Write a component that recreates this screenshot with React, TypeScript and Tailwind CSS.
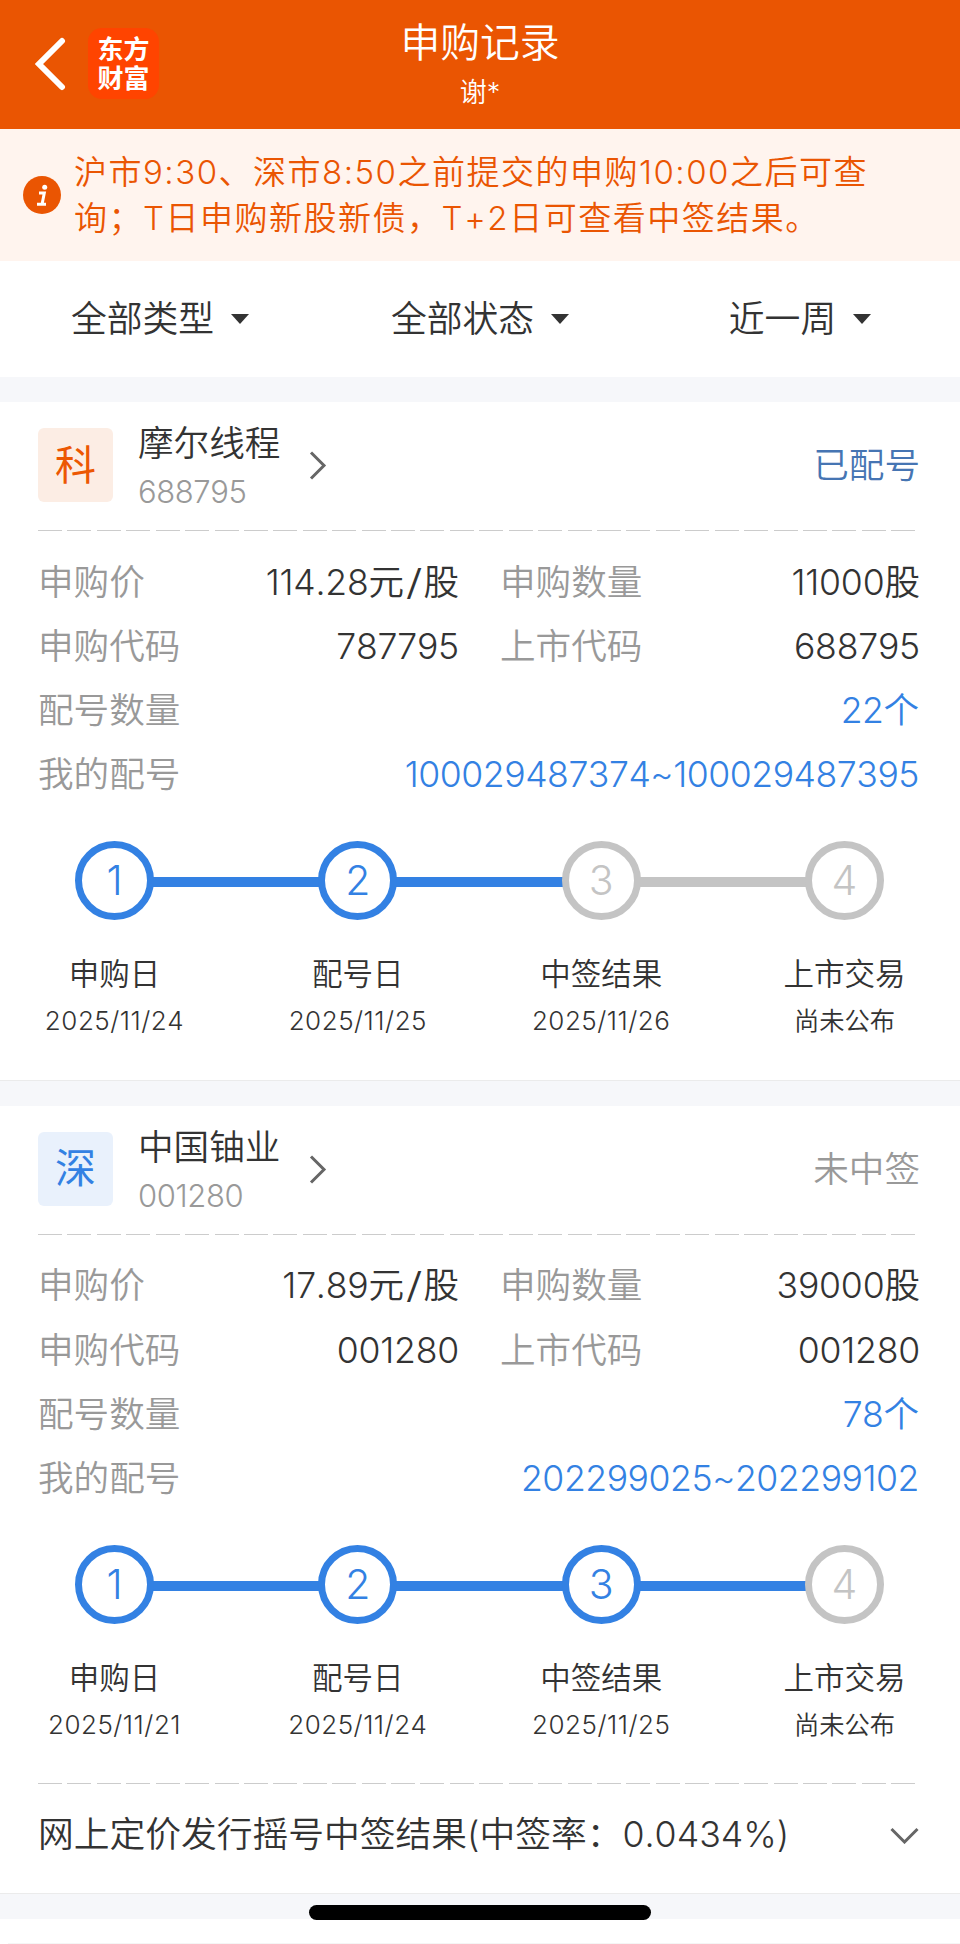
import React from "react";

type StepData = { title: string; note: string; done: boolean };

type RecordData = {
  badge: string;
  badgeClass: string;
  name: string;
  code: string;
  status: string;
  statusClass: string;
  price: string;
  quantity: string;
  applyCode: string;
  listCode: string;
  allotCount: string;
  allotRange: string;
  steps: StepData[];
  result?: string;
};

const records: RecordData[] = [
  {
    badge: "科",
    badgeClass: "bg-[#fcede4] text-[#ec5702]",
    name: "摩尔线程",
    code: "688795",
    status: "已配号",
    statusClass: "text-[#4675b3]",
    price: "114.28元/股",
    quantity: "11000股",
    applyCode: "787795",
    listCode: "688795",
    allotCount: "22个",
    allotRange: "100029487374~100029487395",
    steps: [
      { title: "申购日", note: "2025/11/24", done: true },
      { title: "配号日", note: "2025/11/25", done: true },
      { title: "中签结果", note: "2025/11/26", done: false },
      { title: "上市交易", note: "尚未公布", done: false },
    ],
  },
  {
    badge: "深",
    badgeClass: "bg-[#e9f1fc] text-[#3381e3]",
    name: "中国铀业",
    code: "001280",
    status: "未中签",
    statusClass: "text-[#999999]",
    price: "17.89元/股",
    quantity: "39000股",
    applyCode: "001280",
    listCode: "001280",
    allotCount: "78个",
    allotRange: "202299025~202299102",
    steps: [
      { title: "申购日", note: "2025/11/21", done: true },
      { title: "配号日", note: "2025/11/24", done: true },
      { title: "中签结果", note: "2025/11/25", done: true },
      { title: "上市交易", note: "尚未公布", done: false },
    ],
    result: "网上定价发行摇号中签结果(中签率：0.0434%)",
  },
];

/** Sets runs of Latin characters and digits with their own tracking. */
function Mixed({ text, latin = "tracking-[-0.2px]" }: { text: string; latin?: string }) {
  const parts = text.split(/([\x20-\x7e]+)/).filter(Boolean);
  return (
    <span className="whitespace-nowrap">
      {parts.map((part, i) =>
        /^[\x20-\x7e]/.test(part) ? (
          <span key={i} className={part === "/" ? "mr-[3px] ml-[4px] inline-block scale-x-[1.35]" : latin}>
            {part}
          </span>
        ) : (
          <React.Fragment key={i}>{part}</React.Fragment>
        ),
      )}
    </span>
  );
}

function Header() {
  return (
    <header className="flex h-[129px] bg-[#ea5502] text-white">
      <div className="flex w-[320px] items-start pl-[35px]">
        <svg className="mt-[37px] h-[54px] w-[31px]" viewBox="0 0 31 54" fill="none">
          <path d="M27 4 4 27l23 23" stroke="white" strokeWidth="6" strokeLinecap="round" strokeLinejoin="miter" />
        </svg>
        <div className="mt-[28px] ml-[22px] flex h-[71px] w-[71px] flex-col items-center justify-center rounded-[14px] bg-[#ff4400] text-[26px] leading-[29px] font-bold">
          <span>东方</span>
          <span>财富</span>
        </div>
      </div>
      <div className="flex w-[320px] flex-col items-center">
        <h1 className="mt-[18px] text-[39.8px] leading-[50px]">申购记录</h1>
        <div className="mt-[7px] text-[27px] leading-[36px]">谢*</div>
      </div>
    </header>
  );
}

function Notice() {
  return (
    <section className="flex h-[132px] items-center bg-[#fff4ee] pl-[23px] text-[#ea5502]">
      <svg className="h-[38px] w-[38px]" viewBox="0 0 38 38">
        <circle cx="19" cy="19" r="19" fill="#ea5502" />
        <circle cx="21.7" cy="11.3" r="2.5" fill="white" />
        <path d="M16 17h5.3l-2.2 11M14 28.2h9" fill="none" stroke="white" strokeWidth="3" />
      </svg>
      <p className="ml-[13px] text-[33px] leading-[46px] tracking-[1.5px]">
        <Mixed text="沪市9:30、深市8:50之前提交的申购10:00之后可查" latin="tracking-[1.5px]" />
        <br />
        <Mixed text="询；T日申购新股新债，T+2日可查看中签结果。" latin="tracking-[1.6px]" />
      </p>
    </section>
  );
}

function Filter({ label }: { label: string }) {
  return (
    <div className="flex items-center justify-center text-[35.8px] leading-[50px] text-[#333333]">
      {label}
      <svg className="ml-[17px] h-[10px] w-[18px]" viewBox="0 0 18 10">
        <path d="M0 0h18L9 10z" fill="#333333" />
      </svg>
    </div>
  );
}

function Filters() {
  return (
    <nav className="grid h-[116px] grid-cols-3 items-start pt-[33px]">
      <Filter label="全部类型" />
      <Filter label="全部状态" />
      <Filter label="近一周" />
    </nav>
  );
}

function DashedRule() {
  return (
    <svg className="block h-px w-[878px]" viewBox="0 0 878 1" shapeRendering="crispEdges">
      <path d="M0 .5h878" stroke="#cccccc" strokeDasharray="24 5.42" />
    </svg>
  );
}

function Steps({ steps }: { steps: StepData[] }) {
  return (
    <div className="pr-[76px] pl-[75px]">
      <div className="flex items-center">
        {steps.map((step, i) => (
          <React.Fragment key={step.title}>
            {i > 0 && (
              <div
                className={`z-0 mx-[-3px] mt-[3px] h-[10px] flex-1 ${
                  steps[i - 1].done ? "bg-[#3381e3]" : "bg-[#c4c4c4]"
                }`}
              />
            )}
            <div
              className={`z-10 flex h-[79px] w-[79px] items-center justify-center rounded-full border-[7.5px] bg-white text-[41px] leading-none font-light ${
                step.done ? "border-[#3381e3] text-[#3381e3]" : "border-[#c4c4c4] text-[#c4c4c4]"
              }`}
            >
              {i + 1}
            </div>
          </React.Fragment>
        ))}
      </div>
      <div className="mt-[31px] flex justify-between text-[#333333]">
        {steps.map((step) => (
          <div key={step.title} className="flex w-[79px] flex-col items-center">
            <span className="text-[30.5px] leading-[46px] whitespace-nowrap">{step.title}</span>
            <span className="mt-px text-[25.3px] leading-[46px]">
              <Mixed text={step.note} latin="text-[26px] tracking-[0.5px]" />
            </span>
          </div>
        ))}
      </div>
    </div>
  );
}

function Pair({ label, value }: { label: string; value: string }) {
  return (
    <div className="flex justify-between">
      <span className="text-[#999999]">{label}</span>
      <span className="text-[#333333]">
        <Mixed text={value} />
      </span>
    </div>
  );
}

function WidePair({ label, value }: { label: string; value: string }) {
  return (
    <div className="col-span-2 flex justify-between pr-px">
      <span className="text-[#999999]">{label}</span>
      <span className="text-[#3381e3]">
        <Mixed text={value} latin="tracking-[-0.45px]" />
      </span>
    </div>
  );
}

function RecordCard({ record }: { record: RecordData }) {
  return (
    <article className="border-b border-[#ebebeb] bg-white">
      <div className="flex h-[128px] pr-[40px] pl-[38px]">
        <div
          className={`mt-[26px] flex h-[74px] w-[75px] items-center justify-center rounded-[6px] text-[41px] leading-none font-normal ${record.badgeClass}`}
        >
          {record.badge}
        </div>
        <div className="ml-[25px] flex w-[143px] flex-col pt-[17px]">
          <span className="text-[35.6px] leading-[50px] text-[#333333]">{record.name}</span>
          <span className="text-[31px] leading-[46px] text-[#999999]">
            <Mixed text={record.code} latin="tracking-[-0.4px]" />
          </span>
        </div>
        <svg className="mt-[48px] ml-[28px] h-[31px] w-[18px]" viewBox="0 0 18 31" fill="none">
          <path d="M2 2.500 15 15.500 2 28.500" stroke="#666666" strokeWidth="3" />
        </svg>
        <span className={`mt-[39px] ml-auto text-[35.6px] leading-[50px] ${record.statusClass}`}>
          {record.status}
        </span>
      </div>
      <div className="pl-[38px]">
        <DashedRule />
      </div>
      <div className="grid grid-cols-[421px_420px] gap-x-[41px] pt-[19.5px] pl-[38px] text-[35.6px] leading-[64.3px]">
        <Pair label="申购价" value={record.price} />
        <Pair label="申购数量" value={record.quantity} />
        <Pair label="申购代码" value={record.applyCode} />
        <Pair label="上市代码" value={record.listCode} />
        <WidePair label="配号数量" value={record.allotCount} />
        <WidePair label="我的配号" value={record.allotRange} />
      </div>
      <div className={record.result ? "h-[271.3px] pt-[33.5px]" : "h-[272.3px] pt-[33.5px]"}>
        <Steps steps={record.steps} />
      </div>
      {record.result && (
        <div className="pl-[38px]">
          <DashedRule />
          <div className="flex h-[109px] items-center justify-between pr-[41px] pb-[8px] text-[35.75px] leading-[50px] text-[#333333]">
            <Mixed text={record.result} latin="tracking-[0]" />
            <svg className="mt-[3px] h-[17px] w-[29px]" viewBox="0 0 29 17" fill="none">
              <path d="M1.500 2 14.500 15 27.500 2" stroke="#666666" strokeWidth="3" />
            </svg>
          </div>
        </div>
      )}
    </article>
  );
}

export default function App() {
  return (
    <div className="relative h-[1944px] w-[960px] overflow-hidden bg-white font-['Inter','Noto_Sans_CJK_SC',sans-serif] font-[350] [font-feature-settings:'calt'_0] [font-kerning:none]">
      <Header />
      <Notice />
      <Filters />
      {records.map((record) => (
        <React.Fragment key={record.code}>
          <div className="h-[25px] bg-[#f6f7fa]" />
          <RecordCard record={record} />
        </React.Fragment>
      ))}
      <div className="h-[25px] bg-[#f6f7fa]" />
      <div className="ml-[8px] h-[25px] border-b border-[#f5f5f5]" />
      <div className="absolute top-[1905px] left-[309px] h-[15px] w-[342px] rounded-full bg-black" />
    </div>
  );
}
